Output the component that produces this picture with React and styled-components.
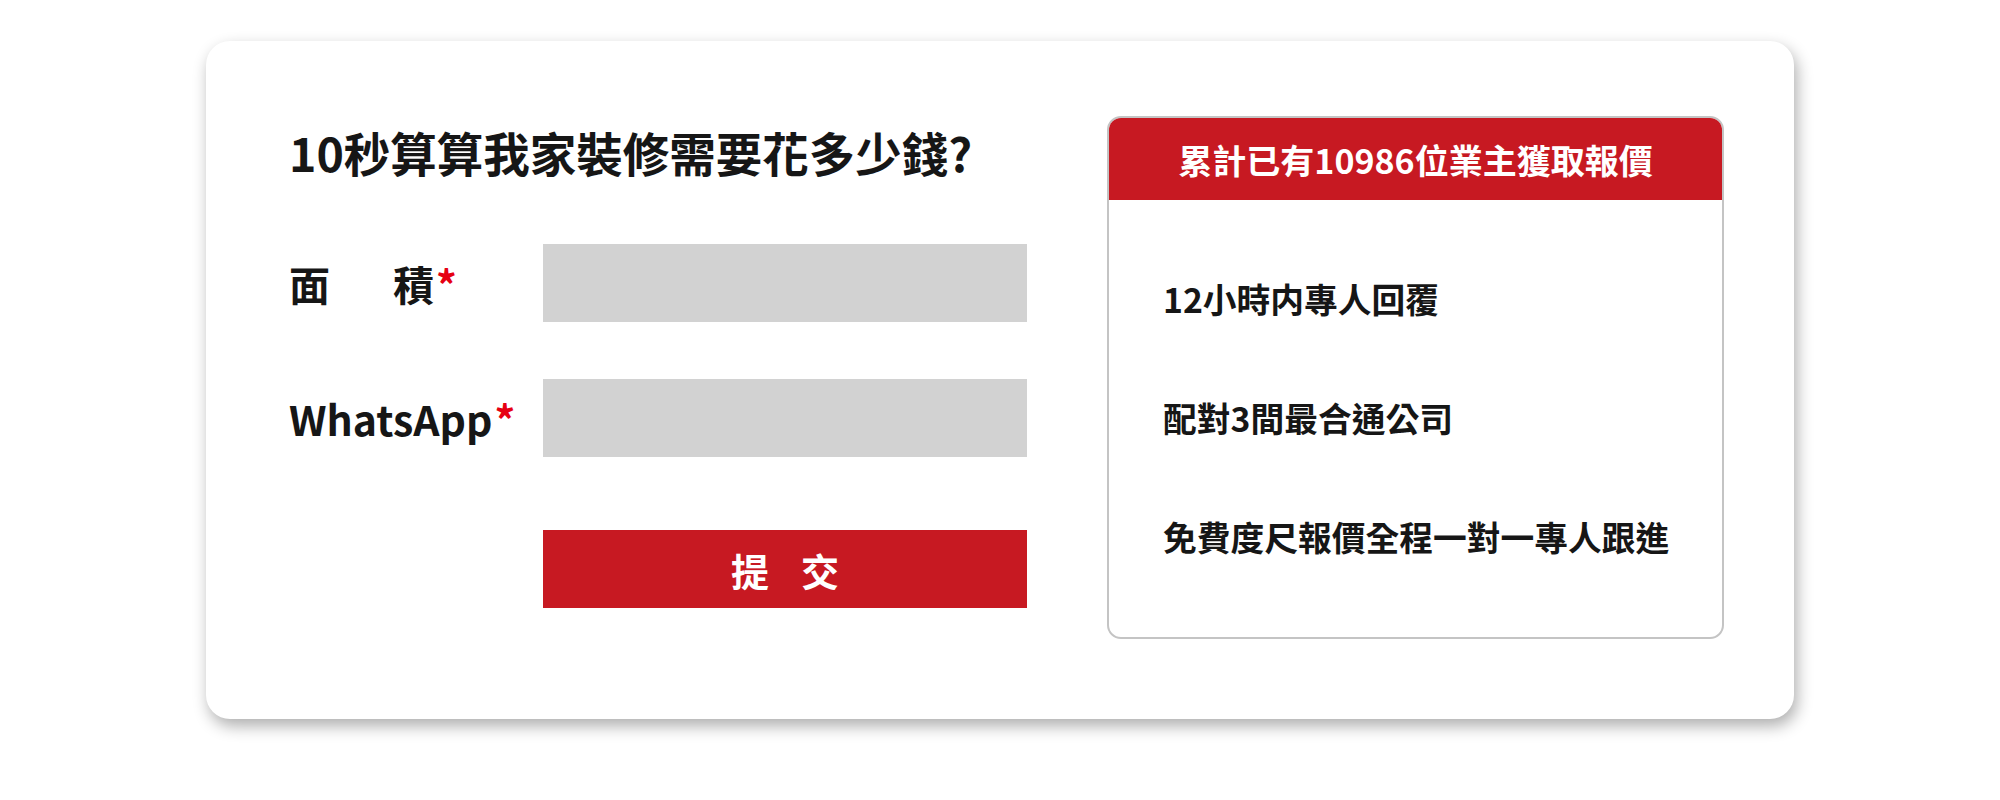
import styled, { createGlobalStyle } from "styled-components";

const GlobalStyle = createGlobalStyle`
  body {
    margin: 0;
    background: #ffffff;
    font-family: "Noto Sans CJK TC", "Noto Sans", sans-serif;
  }
`;

const benefits = [
  "12小時内專人回覆",
  "配對3間最合通公司",
  "免費度尺報價全程一對一專人跟進",
];

export default function App() {
  return (
    <Page>
      <GlobalStyle />
      <Card>
        <FormColumn>
          <Title>10秒算算我家裝修需要花多少錢?</Title>
          <FormRow>
            <Label>
              面<LabelSpacer />積<Required>*</Required>
            </Label>
            <Input type="text" />
          </FormRow>
          <FormRow>
            <Label>
              WhatsApp<Required>*</Required>
            </Label>
            <Input type="text" />
          </FormRow>
          <SubmitButton type="button">
            <span>提</span>
            <span>交</span>
          </SubmitButton>
        </FormColumn>
        <InfoBox>
          <InfoHeader>累計已有10986位業主獲取報價</InfoHeader>
          <InfoList>
            {benefits.map((text) => (
              <InfoItem key={text}>{text}</InfoItem>
            ))}
          </InfoList>
        </InfoBox>
      </Card>
    </Page>
  );
}

const Page = styled.div`
  padding: 41px 0 60px;
`;

const Card = styled.div`
  box-sizing: border-box;
  width: 1588px;
  height: 678px;
  margin: 0 auto;
  padding: 75px 70px 0 83px;
  background: #ffffff;
  border-radius: 24px;
  box-shadow: 3px 7px 16px rgba(0, 0, 0, 0.32);
  display: flex;
  justify-content: space-between;
  align-items: flex-start;
`;

const FormColumn = styled.div`
  display: flex;
  flex-direction: column;
  padding-top: 13px;
`;

const Title = styled.h1`
  margin: 0 0 69px;
  font-size: 46.5px;
  line-height: 46px;
  font-weight: 700;
  color: #161616;
`;

const FormRow = styled.div`
  display: flex;
  align-items: center;
  margin-bottom: 57px;
`;

const Label = styled.label`
  width: 254px;
  display: flex;
  align-items: center;
  font-size: 41px;
  line-height: 40px;
  font-weight: 700;
  color: #161616;
`;

const LabelSpacer = styled.span`
  display: inline-block;
  width: 63px;
`;

const Required = styled.span`
  color: #e60012;
  margin-left: 2px;
`;

const Input = styled.input`
  box-sizing: border-box;
  width: 484px;
  height: 78px;
  border: none;
  background: #d2d2d2;
  outline: none;
`;

const SubmitButton = styled.button`
  box-sizing: border-box;
  margin: 16px 0 0 254px;
  width: 484px;
  height: 78px;
  border: none;
  background: #c71922;
  color: #ffffff;
  font-family: inherit;
  font-size: 38px;
  font-weight: 700;
  display: flex;
  align-items: center;
  justify-content: center;
  gap: 32px;
  cursor: pointer;
`;

const InfoBox = styled.div`
  box-sizing: border-box;
  width: 617px;
  height: 523px;
  border: 2px solid #c4c4c4;
  border-radius: 14px;
  overflow: hidden;
  background: #ffffff;
`;

const InfoHeader = styled.div`
  height: 82px;
  background: #c71922;
  color: #ffffff;
  font-size: 34px;
  font-weight: 700;
  display: flex;
  align-items: center;
  justify-content: center;
`;

const InfoList = styled.div`
  display: flex;
  flex-direction: column;
  gap: 85px;
  padding: 82px 0 0 54px;
`;

const InfoItem = styled.div`
  font-size: 33.75px;
  line-height: 34px;
  font-weight: 700;
  color: #161616;
`;
